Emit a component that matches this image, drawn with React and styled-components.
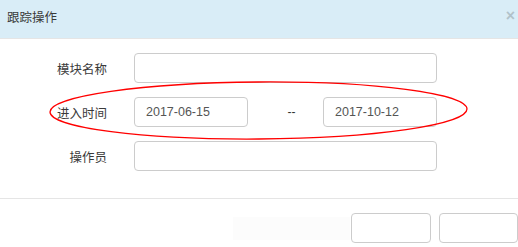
import React from 'react';
import styled, { createGlobalStyle } from 'styled-components';

const Global = createGlobalStyle`
  html, body { margin: 0; padding: 0; background: #fff; }
  body { font-family: "Liberation Sans", "Noto Sans CJK SC", sans-serif; color: #333; }
`;

function App() {
  return (
    <>
      <Global />
      <Modal>
        <Header>
          <Title>跟踪操作</Title>
          <Close>×</Close>
        </Header>
        <Body>
          <Row>
            <Label>模块名称</Label>
            <Input wide />
          </Row>
          <Row>
            <Label>进入时间</Label>
            <Input value="2017-06-15" readOnly />
            <Dash>--</Dash>
            <Input value="2017-10-12" readOnly />
          </Row>
          <Row>
            <Label>操作员</Label>
            <Input wide />
          </Row>
          <Mark viewBox="0 0 518 247">
            <ellipse cx="258.5" cy="110.5" rx="208.5" ry="28.5" fill="none" stroke="#f00" strokeWidth="1.3" transform="rotate(-0.4 258.5 110.5)" />
          </Mark>
        </Body>
        <Footer>
          <Ghost />
          <Button w={80} />
          <Button w={79} />
        </Footer>
      </Modal>
    </>
  );
}

export default App;

const Modal = styled.div`
  width: 518px;
  height: 247px;
  position: relative;
  overflow: hidden;
`;

const Header = styled.div`
  height: 39px;
  background: #d9edf7;
  border-bottom: 1px solid #e5e5e5;
  display: flex;
  align-items: center;
  justify-content: space-between;
  padding: 0 3px 0 7px;
  box-sizing: border-box;
`;

const Title = styled.span`
  font-family: "Noto Sans CJK SC", sans-serif;
  font-size: 12.5px;
  color: #3a3a3a;
  margin-top: -6px;
`;

const Close = styled.span`
  font-family: "Liberation Sans", sans-serif;
  font-size: 16px;
  font-weight: bold;
  color: #000;
  opacity: 0.18;
  margin-top: -6px;
`;

const Body = styled.div`
  padding: 14px 0 27px;
  display: flex;
  flex-direction: column;
  gap: 14px;
  border-bottom: 1px solid #e5e5e5;
`;

const Row = styled.div`
  display: flex;
  align-items: center;
  height: 30px;
`;

const Label = styled.label`
  width: 107px;
  margin-right: 27px;
  text-align: right;
  font-family: "Noto Sans CJK SC", sans-serif;
  font-size: 12.5px;
  color: #3a3a3a;
`;

const Input = styled.input`
  box-sizing: border-box;
  width: ${p => (p.wide ? '303px' : '114px')};
  height: 30px;
  border: 1px solid #ccc;
  border-radius: 4px;
  padding: 0 11px;
  font-family: "Liberation Sans", sans-serif;
  font-size: 12.5px;
  color: #555;
  background: #fff;
  outline: none;
`;

const Dash = styled.span`
  width: 75px;
  box-sizing: border-box;
  padding-left: 12px;
  text-align: center;
  font-size: 12px;
  color: #333;
`;

const Mark = styled.svg`
  position: absolute;
  left: 0;
  top: 0;
  width: 518px;
  height: 247px;
  pointer-events: none;
`;

const Footer = styled.div`
  display: flex;
  justify-content: flex-end;
  align-items: center;
  gap: 8px;
  padding: 14px 0 0 0;
`;

const Ghost = styled.div`
  width: 117px;
  height: 23px;
  background: #fcfcfc;
  margin-right: -7px;
`;

const Button = styled.button`
  box-sizing: border-box;
  width: ${p => p.w}px;
  height: 30px;
  border: 1px solid #ccc;
  border-radius: 4px;
  background: #fff;
`;
